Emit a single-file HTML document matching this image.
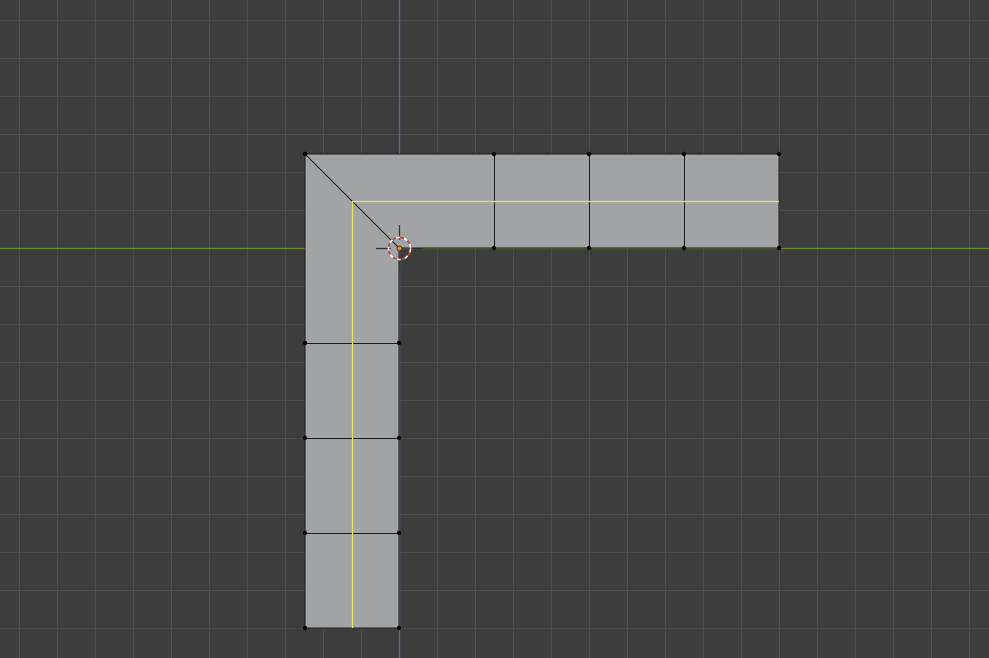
<!DOCTYPE html>
<html><head><style>html,body{margin:0;padding:0;background:#3d3d3d;overflow:hidden}</style></head>
<body>
<svg width="989" height="658" viewBox="0 0 989 658" xmlns="http://www.w3.org/2000/svg" style="display:block">
<defs>
<pattern id="g" x="0.5" y="1.5" width="38" height="38" patternUnits="userSpaceOnUse">
<path d="M19 0V38M0 19H38" stroke="#4c4c4c" stroke-width="1" fill="none"/>
</pattern>
</defs>
<rect width="989" height="658" fill="#3d3d3d"/>
<rect width="989" height="658" fill="url(#g)"/>
<line x1="0" y1="248.5" x2="989" y2="248.5" stroke="#6d8a31" stroke-width="1.2"/>
<line x1="399.5" y1="0" x2="399.5" y2="658" stroke="#4470a8" stroke-width="1.3"/>
<path d="M305 154H779V248H399V628H305Z" fill="#a2a3a4"/>
<g stroke="#1a1a1a" stroke-width="1" fill="none">
<path d="M305 154H779V248H399V628H305Z"/>
<path d="M494.5 154V248M589.5 154V248M684.5 154V248"/>
<path d="M305 343.5H399M305 438.5H399M305 533.5H399"/>
<path d="M305 154L399 248"/>
</g>
<path d="M352.5 628V201.5H779" stroke="#e6e36a" stroke-width="1.2" fill="none"/>
<g fill="#000">
<circle cx="305" cy="154" r="2.2"/><circle cx="494" cy="154" r="2.2"/><circle cx="589" cy="154" r="2.2"/><circle cx="684" cy="154" r="2.2"/><circle cx="779" cy="154" r="2.2"/>
<circle cx="494" cy="248" r="2.2"/><circle cx="589" cy="248" r="2.2"/><circle cx="684" cy="248" r="2.2"/><circle cx="779" cy="248" r="2.2"/>
<circle cx="305" cy="343" r="2.2"/><circle cx="399" cy="343" r="2.2"/><circle cx="305" cy="438" r="2.2"/><circle cx="399" cy="438" r="2.2"/><circle cx="305" cy="533" r="2.2"/><circle cx="399" cy="533" r="2.2"/><circle cx="305" cy="628" r="2.2"/><circle cx="399" cy="628" r="2.2"/>
</g>
<g>
<path d="M399.5 225V240M399.5 257V272M376 248.5H391M408 248.5H423" stroke="#333" stroke-width="1.2"/>
<circle cx="399.5" cy="248.5" r="11" fill="none" stroke="#ffffff" stroke-width="1.6" stroke-dasharray="4 4"/>
<circle cx="399.5" cy="248.5" r="11" fill="none" stroke="#d23a3a" stroke-width="1.6" stroke-dasharray="4 4" stroke-dashoffset="4"/>
<circle cx="399.5" cy="248.5" r="2.5" fill="#e98a3a" stroke="#222" stroke-width="0.8"/>
</g>
</svg>
</body></html>
